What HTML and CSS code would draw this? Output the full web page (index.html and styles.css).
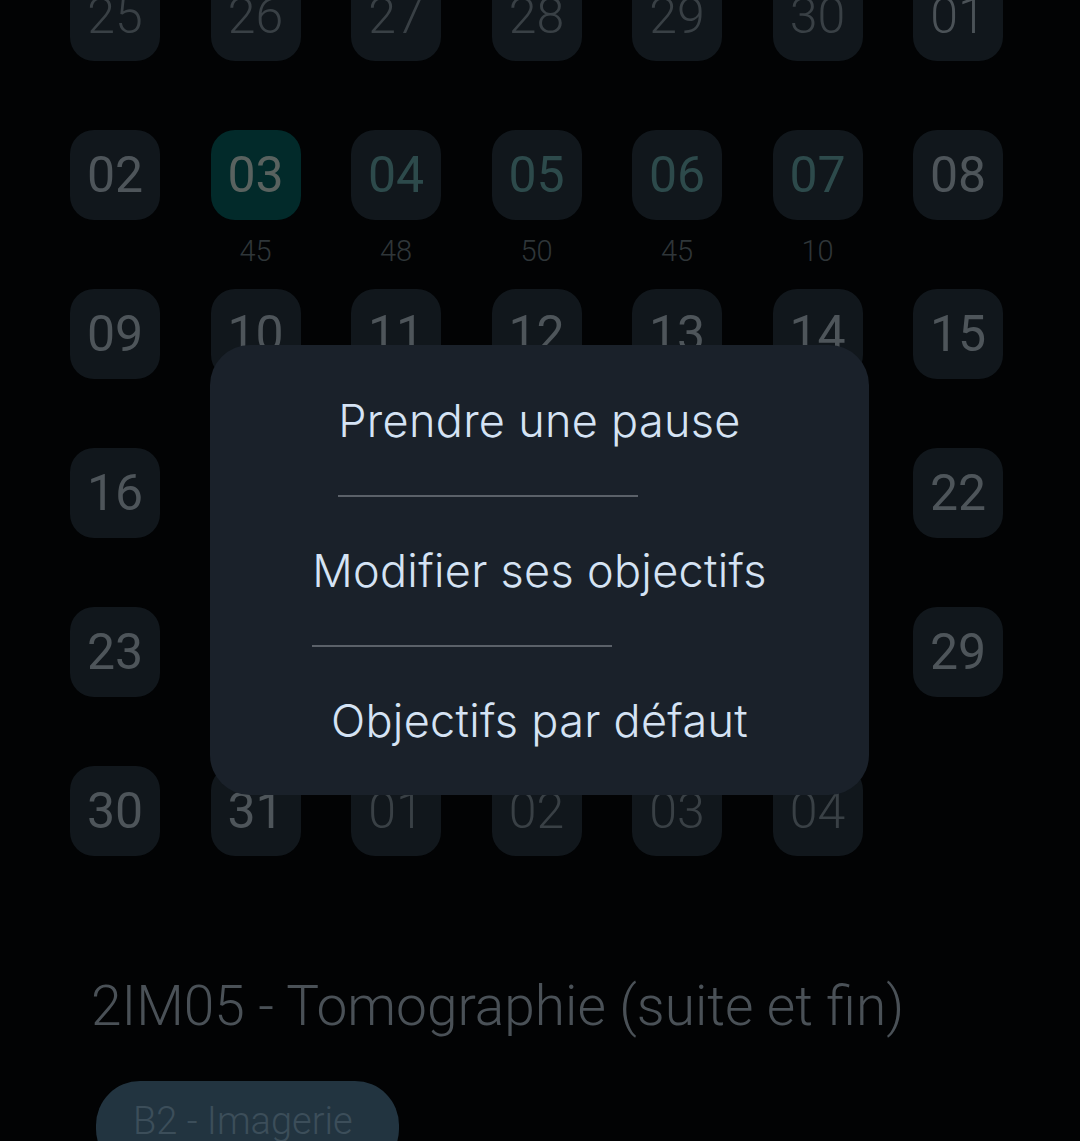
FILE: index.html
```html
<!DOCTYPE html>
<html lang="fr">
<head>
<meta charset="utf-8">
<title>Calendrier</title>
<link rel="stylesheet" href="styles.css">
</head>
<body>
<div class="screen">
  <div class="calendar">
    <div class="day other"><div class="box">25</div><div class="count"></div></div>
    <div class="day other"><div class="box">26</div><div class="count"></div></div>
    <div class="day other"><div class="box">27</div><div class="count"></div></div>
    <div class="day other"><div class="box">28</div><div class="count"></div></div>
    <div class="day other"><div class="box">29</div><div class="count"></div></div>
    <div class="day other"><div class="box">30</div><div class="count"></div></div>
    <div class="day first"><div class="box">01</div><div class="count"></div></div>

    <div class="day"><div class="box">02</div><div class="count"></div></div>
    <div class="day selected"><div class="box">03</div><div class="count">45</div></div>
    <div class="day planned"><div class="box">04</div><div class="count">48</div></div>
    <div class="day planned"><div class="box">05</div><div class="count">50</div></div>
    <div class="day planned"><div class="box">06</div><div class="count">45</div></div>
    <div class="day planned"><div class="box">07</div><div class="count">10</div></div>
    <div class="day"><div class="box">08</div><div class="count"></div></div>

    <div class="day"><div class="box">09</div><div class="count"></div></div>
    <div class="day"><div class="box">10</div><div class="count"></div></div>
    <div class="day"><div class="box">11</div><div class="count"></div></div>
    <div class="day"><div class="box">12</div><div class="count"></div></div>
    <div class="day"><div class="box">13</div><div class="count"></div></div>
    <div class="day"><div class="box">14</div><div class="count"></div></div>
    <div class="day"><div class="box">15</div><div class="count"></div></div>

    <div class="day"><div class="box">16</div><div class="count"></div></div>
    <div class="day"><div class="box">17</div><div class="count"></div></div>
    <div class="day"><div class="box">18</div><div class="count"></div></div>
    <div class="day"><div class="box">19</div><div class="count"></div></div>
    <div class="day"><div class="box">20</div><div class="count"></div></div>
    <div class="day"><div class="box">21</div><div class="count"></div></div>
    <div class="day"><div class="box">22</div><div class="count"></div></div>

    <div class="day"><div class="box">23</div><div class="count"></div></div>
    <div class="day"><div class="box">24</div><div class="count"></div></div>
    <div class="day"><div class="box">25</div><div class="count"></div></div>
    <div class="day"><div class="box">26</div><div class="count"></div></div>
    <div class="day"><div class="box">27</div><div class="count"></div></div>
    <div class="day"><div class="box">28</div><div class="count"></div></div>
    <div class="day"><div class="box">29</div><div class="count"></div></div>

    <div class="day"><div class="box">30</div><div class="count"></div></div>
    <div class="day"><div class="box">31</div><div class="count"></div></div>
    <div class="day other"><div class="box">01</div><div class="count"></div></div>
    <div class="day other"><div class="box">02</div><div class="count"></div></div>
    <div class="day other"><div class="box">03</div><div class="count"></div></div>
    <div class="day other"><div class="box">04</div><div class="count"></div></div>
  </div>

  <div class="course">
    <h1 class="course-title">2IM05 - Tomographie (suite et fin)</h1>
    <span class="chip">B2 - Imagerie</span>
  </div>

  <div class="menu">
    <div class="option">
      <span class="option-label">Prendre une pause</span>
      <div class="divider"></div>
    </div>
    <div class="option">
      <span class="option-label">Modifier ses objectifs</span>
      <div class="divider"></div>
    </div>
    <div class="option">
      <span class="option-label">Objectifs par défaut</span>
    </div>
  </div>
</div>
</body>
</html>
```

FILE: styles.css
```css
html, body {
  margin: 0;
  padding: 0;
  background: #020304;
}

body {
  width: 1080px;
  height: 1141px;
  overflow: hidden;
  font-family: Roboto, "Liberation Sans", sans-serif;
}

.screen {
  position: relative;
  width: 1080px;
  height: 1141px;
  overflow: hidden;
}

.calendar {
  display: grid;
  grid-template-columns: repeat(7, 90px);
  column-gap: 50.5px;
  margin-top: -29px;
  padding-left: 70px;
}

.day {
  display: flex;
  flex-direction: column;
  align-items: center;
}

.box {
  width: 90px;
  height: 90px;
  border-radius: 24px;
  background: #11171c;
  color: #4e555a;
  font-size: 50px;
  font-weight: 400;
  display: flex;
  align-items: center;
  justify-content: center;
  line-height: 1;
}

.day.other .box {
  color: #394045;
  font-weight: 300;
}

.day.first .box {
  color: #4b5257;
  font-weight: 300;
}

.day.selected .box {
  background: #022a2a;
  color: #59625f;
}

.day.planned .box {
  color: #2d4a4b;
}

.count {
  height: 69px;
  line-height: 62px;
  font-size: 29px;
  font-weight: 300;
  color: #2f3639;
}

.course {
  padding-left: 91px;
  margin-top: 48px;
}

.course-title {
  margin: 0;
  font-size: 55px;
  line-height: 66px;
  font-weight: 300;
  color: #4a5157;
}

.chip {
  display: inline-block;
  margin-top: 42px;
  margin-left: 5px;
  padding: 18px 46px 30px 37px;
  border-radius: 44px;
  background: #223440;
  color: #3c4e5a;
  font-size: 38px;
  font-weight: 300;
  line-height: 44px;
}

.menu {
  position: absolute;
  left: 210px;
  top: 345px;
  width: 659px;
  height: 450px;
  box-sizing: border-box;
  padding-top: 40px;
  border-radius: 40px;
  background: #1a212a;
  display: flex;
  flex-direction: column;
  align-items: center;
  font-family: Inter, "Noto Sans", sans-serif;
}

.option {
  display: flex;
  flex-direction: column;
  align-items: flex-start;
}

.option-label {
  font-size: 45px;
  line-height: 72px;
  font-weight: 300;
  letter-spacing: 0.3px;
  color: #d5e3f4;
}

.divider {
  width: 300px;
  height: 2px;
  background: #5b6169;
  margin-top: 38px;
  margin-bottom: 38px;
}
```
